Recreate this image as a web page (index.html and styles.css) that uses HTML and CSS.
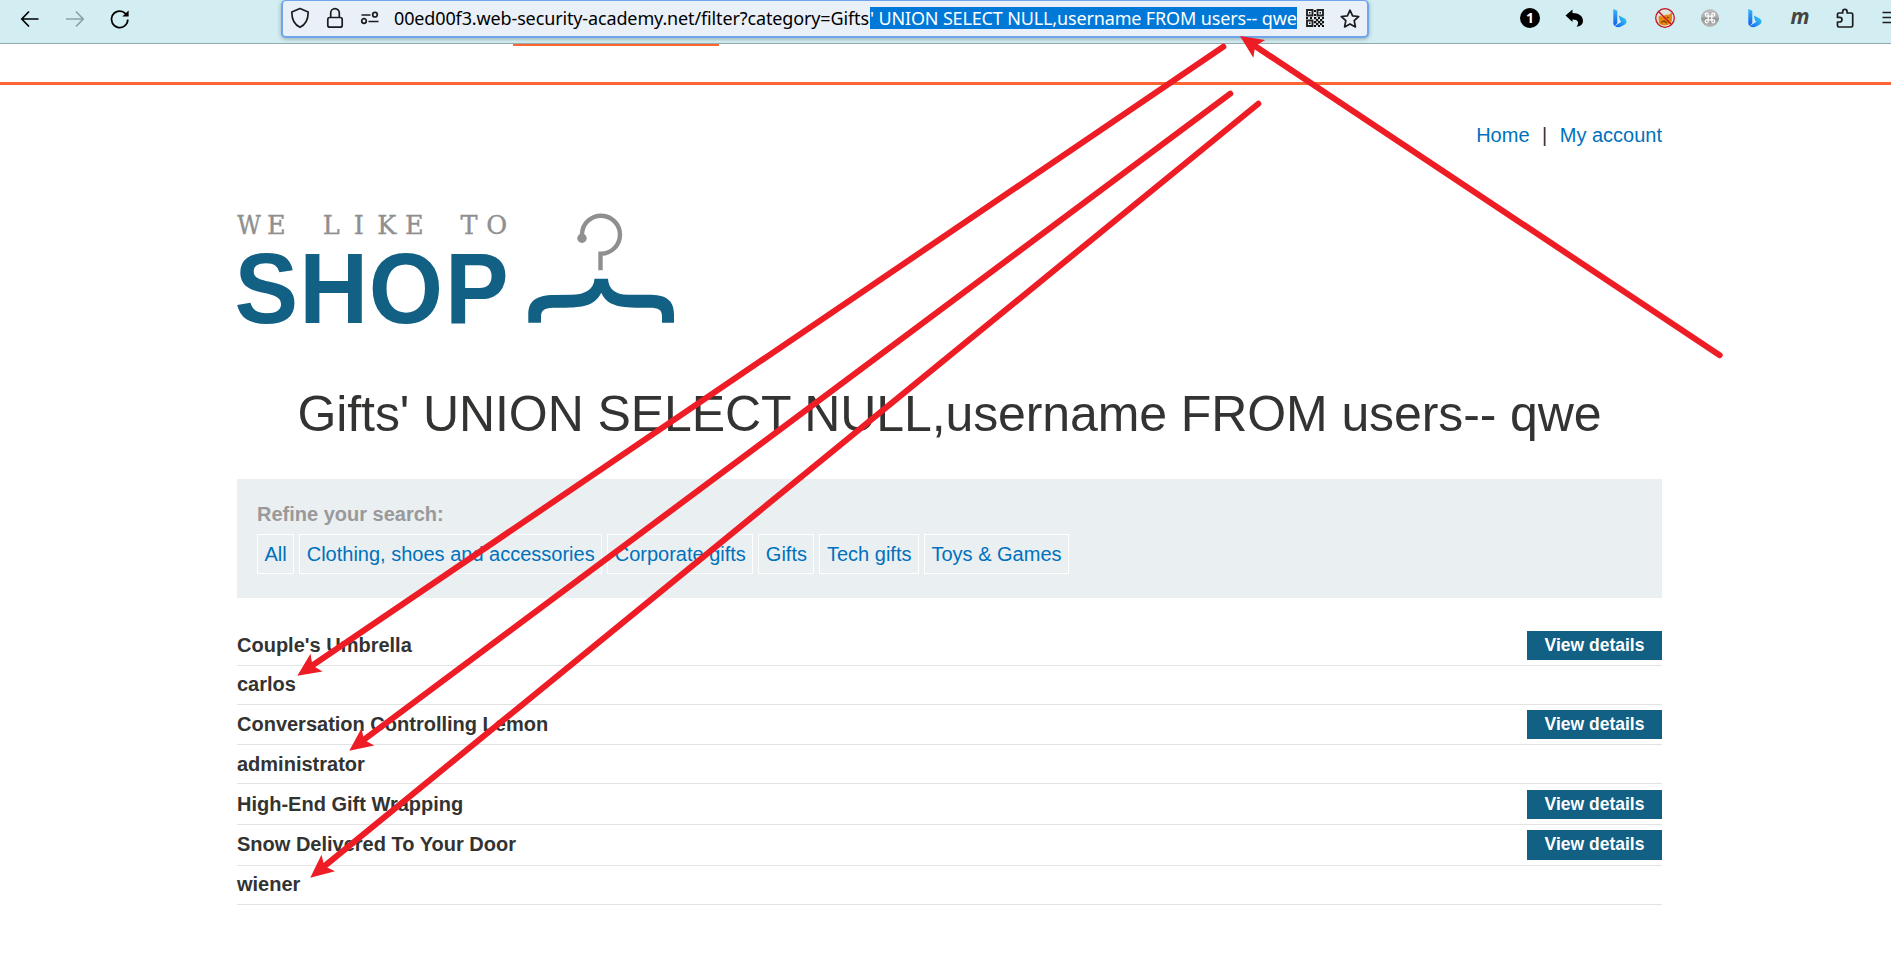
FILE: index.html
```html
<!DOCTYPE html>
<html lang="en">
<head>
<meta charset="utf-8">
<title>Shop</title>
<link rel="stylesheet" href="styles.css">
</head>
<body>
<div class="toolbar">
  <div class="nav">
    <svg class="ico" width="20" height="20" viewBox="0 0 20 20"><path d="M18.500 10H2M9 2.500L1.800 10L9 17.500"/></svg>
    <svg class="ico" width="20" height="20" viewBox="0 0 20 20"><path d="M1 10H18M11 2.500L18.200 10L11 17.500"/></svg>
    <svg class="ico" width="20" height="20" viewBox="0 0 20 20"><path d="M17.800 10.500A8.200 8.200 0 1 1 14.500 3.800L17 6"/><path d="M18.600 1.500V7.600H12.300Z"/></svg>
  </div>
  <div class="urlbar">
    <div class="site">
      <svg class="ico" width="20" height="22" viewBox="0 0 20 22"><path d="M10 1.500L18.200 5C18.200 12 16 17.500 10 20.300C4 17.500 1.800 12 1.800 5Z" stroke-linejoin="round"/></svg>
      <svg class="ico" width="18" height="22" viewBox="0 0 18 22"><rect x="1.800" y="10.500" width="14.400" height="9.700" rx="2"/><path d="M4.700 10.500V6A4.300 4.300 0 0 1 13.300 6V10.500"/></svg>
      <svg class="ico" width="20" height="16" viewBox="0 0 20 16"><path d="M1.500 5H10.500M8.500 11.500H18.500"/><circle cx="15" cy="4.700" r="2.300"/><circle cx="4" cy="11" r="2.300"/></svg>
    </div>
    <div class="url"><span class="url-a">00ed00f3.web-security-academy.net/filter?category=Gifts</span><span class="url-b">' UNION SELECT NULL,username FROM users-- qwe</span></div>
    <svg class="qr" width="18" height="18" viewBox="0 0 18 18"><path d="M1 1H6.500V6.500H1ZM11.500 1H17V6.500H11.500ZM1 11.500H6.500V17H1Z" fill="none" stroke="#222" stroke-width="1.900"/><path fill="#111" d="M3 3H4.500V4.500H3ZM13.500 3H15V4.500H13.500ZM3 13.500H4.500V15H3ZM8 1H10V3H8ZM8 5H10V7H8ZM0 8H2V10H0ZM4 8H6V10H4ZM8 8H10.300V10.300H8ZM12 8H14V10H12ZM16 8H18V10H16ZM10 10H12.300V12.300H10ZM14 10H16.300V12.300H14ZM8 12H10.300V14.300H8ZM12 12H14.300V14.300H12ZM16 12H18V14.300H16ZM10 14H12.300V16.300H10ZM14 14H16.300V16.300H14ZM8 16H10V18H8ZM12 16H14V18H12ZM16 16H18V18H16Z"/></svg>
    <svg class="ico star" width="20" height="20" viewBox="0 0 20 20"><path d="M10 1.200L12.600 6.800L18.700 7.500L14.200 11.600L15.400 17.900L10 14.900L4.600 17.900L5.800 11.600L1.300 7.500L7.400 6.800Z" stroke-linejoin="round"/></svg>
  </div>
  <div class="ext">
    <svg width="20" height="20" viewBox="0 0 20 20"><circle cx="10" cy="10" r="10"/><text class="one" x="10" y="15" text-anchor="middle">1</text></svg>
    <svg width="20" height="20" viewBox="0 0 20 20"><path d="M.5 7.500L7.500 1.500V5C14 5 18 8 18 13C18 16 16 18 11.500 18.800C14.500 15 13.500 11.500 7.500 11.500V14Z"/></svg>
    <svg width="20" height="20" viewBox="0 0 20 20"><use href="#bing"/></svg>
    <svg width="20" height="20" viewBox="0 0 20 20"><circle cx="10" cy="10" r="9" fill="#dce3e2"/><path d="M3.500 9L5 7.500L8 9C10 6 12 7 13 7L17 4.500L17 12C16 18 7 19 4 15Z" fill="#e8860c"/><path d="M6 14.500L9 13L12 15M12 9L14 10" fill="none" stroke="#6b4310" stroke-width="1.200"/><circle cx="10" cy="10" r="9.300" fill="none" stroke="#c8131e" stroke-width="1.300"/><path d="M3.500 3.500L16.500 16.500" stroke="#c8131e" stroke-width="1.400"/></svg>
    <svg width="20" height="20" viewBox="0 0 20 20"><defs><linearGradient id="gr" x2="0" y2="1"><stop offset="0" stop-color="#c0c0c0"/><stop offset=".49" stop-color="#aaa"/><stop offset=".5" stop-color="#909090"/><stop offset="1" stop-color="#bababa"/></linearGradient></defs><circle cx="10" cy="10" r="9" fill="url(#gr)"/><path d="M8.200 8.200H11.800V11.800H8.200ZM8.200 8.200H6.700A1.500 1.500 0 1 1 8.200 6.700ZM11.800 8.200V6.700A1.500 1.500 0 1 1 13.300 8.200ZM11.800 11.800H13.300A1.500 1.500 0 1 1 11.800 13.300ZM8.200 11.800V13.300A1.500 1.500 0 1 1 6.700 11.800Z" fill="none" stroke="#fff" stroke-width="1.200"/></svg>
    <svg width="20" height="20" viewBox="0 0 20 20"><defs><linearGradient id="b1" x2="0" y2="1"><stop offset="0" stop-color="#35b6f6"/><stop offset="1" stop-color="#1457ee"/></linearGradient><linearGradient id="b2" x1="1" x2="0" y2="1"><stop offset="0" stop-color="#3ad6ee"/><stop offset="1" stop-color="#1260f4"/></linearGradient><g id="bing"><path d="M3.300 1L7.300 2.800V15L4.800 18Q3.300 17 3.300 15Z" fill="url(#b1)"/><path d="M8.800 7.500L14 10Q16.800 11.500 16.500 14.500Q15.500 16.500 12 18Q8 20.500 4.800 18L11.500 13.800L10 12.200Z" fill="url(#b2)"/></g></defs><use href="#bing"/></svg>
    <svg width="20" height="20" viewBox="0 0 20 20"><text class="em" x="10" y="15.500" text-anchor="middle">m</text></svg>
    <svg class="ico" width="20" height="20" viewBox="0 0 20 20"><path transform="translate(.7 0)" d="M1.800 7V6Q1.800 5 3 5H7V3.500A2.200 2.200 0 0 1 11.400 3.500V5H15.500Q17 5 17 6.500V17.500Q17 19 15.500 19H3.300Q1.800 19 1.800 17.500V14H4A2.300 2.300 0 0 0 4 9.400H1.800Z" stroke-linejoin="round"/></svg>
    <svg class="ico" width="20" height="20" viewBox="0 0 20 20"><path d="M2.500 4.500H19M2.500 9.500H19M2.500 14.500H19"/></svg>
  </div>
</div>
<div class="lab"><div class="lab-mark"></div></div>
<main class="page">
  <nav class="top"><a>Home</a><span>|</span><a>My account</a></nav>
  <svg class="logo" width="450" height="130" viewBox="0 0 450 130">
    <text class="like" y="33.500" text-anchor="middle" x="12 39.200 66.700 94.200 121.700 149.700 177.200 204.500 232 259.700"><tspan class="cond">W</tspan>E LIKE TO</text>
    <g transform="scale(.955 1)"><text class="shop" y="122.700" x="-2.500 65.200 138 217.700">SHOP</text></g>
    <g transform="translate(0 .7)">
      <path d="M345 37V33A19 19 0 1 1 364 53H363.500V69.500" fill="none" stroke="#8f8f8f" stroke-width="4.400"/>
      <circle cx="345" cy="37.500" r="4.700" fill="#8f8f8f"/>
      <path d="M357.500 78H371C371.500 88 378 94 391 94H411C429 94 437 99 437 114V122H425V116C425 109 422 107 412 107C386 107 371 107 364.300 92C357 106 345 107 320 107C309 107 304 108 304 116V122H291.300V114C291.300 100 299 94.500 317 94.200L334 94C349 94 357 88 357.500 78Z" fill="#126084"/>
    </g>
  </svg>
  <h1>Gifts' UNION SELECT NULL,username FROM users-- qwe</h1>
  <section class="filter">
    <label>Refine your search:</label>
    <div class="chips"><a>All</a><a>Clothing, shoes and accessories</a><a>Corporate gifts</a><a>Gifts</a><a>Tech gifts</a><a>Toys &amp; Games</a></div>
  </section>
  <div class="list">
    <div class="row r1"><b>Couple's Umbrella</b><a>View details</a></div>
    <div class="row r2"><b>carlos</b></div>
    <div class="row r3"><b>Conversation Controlling Lemon</b><a>View details</a></div>
    <div class="row r5"><b>administrator</b></div>
    <div class="row r4"><b>High-End Gift Wrapping</b><a>View details</a></div>
    <div class="row r4 up"><b>Snow Delivered To Your Door</b><a>View details</a></div>
    <div class="row r2"><b>wiener</b></div>
  </div>
</main>
<svg class="arrows" width="1891" height="957" viewBox="0 0 1891 957">
  <defs><marker id="head" markerUnits="userSpaceOnUse" markerWidth="26" markerHeight="24" refX="13.500" refY="12" orient="auto"><path d="M23.500 12L.3 1.300L5.200 12L.3 22.700Z" fill="#ee1c25"/></marker></defs>
  <path d="M1223.300 46.700L305.600 670.100"/>
  <path d="M1230.300 93.700L357.300 744.700"/>
  <path d="M1258.300 103.700L318 871.400"/>
  <path d="M1719.700 355.200L1248.300 41.500"/>
</svg>
</body>
</html>
```
FILE: styles.css
```css
* { box-sizing: border-box; }
body {
  margin: 0;
  width: 1891px;
  height: 957px;
  overflow: hidden;
  position: relative;
  background: #fff;
  color: #333332;
  font: 20px "Liberation Sans", Arial, sans-serif;
}
svg { display: block; flex: none; overflow: visible; }
.toolbar {
  height: 44px;
  display: flex;
  align-items: flex-start;
  background: #d2eef2;
  border-bottom: 1px solid #93a9ac;
}
.ico path, .ico rect, .ico circle { fill: none; stroke: #1c1c1e; stroke-width: 1.7; }
.nav { display: flex; gap: 25px; padding: 9px 0 0 20px; width: 281px; flex: none; }
.nav .ico path { stroke: #000; }
.nav .ico:nth-child(2) path { stroke: #8ba2a5; }
.nav .ico:nth-child(3) path:last-child { fill: #000; stroke: none; }
.urlbar {
  width: 1088px;
  height: 38px;
  flex: none;
  display: flex;
  align-items: flex-start;
  background: #e9f0f7;
  border: 2px solid #6fa5ec;
  border-top-width: 1px;
  border-radius: 5px;
  box-shadow: 0 1px 4px rgba(0, 0, 0, .3);
}
.site { display: flex; flex: none; gap: 16px; padding: 6px 0 0 7px; width: 111px; align-items: center; }
.url {
  display: flex;
  flex: none;
  margin-top: 6px;
  width: 903px;
  height: 22px;
  font: 18px/22px "Noto Sans", sans-serif;
  color: #000;
  white-space: pre;
}
.url-a { width: 476px; letter-spacing: -.135px; }
.url-b { width: 427px; letter-spacing: -.15px; background: #0078d7; color: #fff; }
.qr { margin: 8px 0 0 9px; }
.star { margin: 8px 0 0 16px; }
.ext { display: flex; gap: 25px; padding: 8px 0 0; margin-left: 151px; flex: none; }
.one { font: bold 14px "Noto Sans", sans-serif; fill: #fff; }
.em { font: italic bold 21px "Open Sans", sans-serif; fill: #444; }
.lab { height: 41px; border-bottom: 3px solid #ff6633; }
.lab-mark { width: 206px; height: 2px; margin-left: 513px; background: #ff6633; }
.page { width: 1425px; margin-left: 237px; }
.top { display: flex; justify-content: flex-end; padding-top: 39px; height: 115px; line-height: 23px; }
.top span { margin: 0 12.5px; }
a { color: #0071bc; }
.logo { height: 130px; }
.like { font: 25.5px "DejaVu Serif", serif; fill: #8f8f8f; stroke: #8f8f8f; stroke-width: .4; }
.cond { font-family: "DejaVu Serif Condensed", "DejaVu Serif", serif; font-stretch: condensed; }
.shop { font: bold 100px "Liberation Sans", Arial, sans-serif; fill: #126084; }
h1 {
  margin: 54px 0 0;
  height: 95px;
  font-size: 50px;
  font-weight: 400;
  line-height: 60px;
  letter-spacing: -.1px;
  text-align: center;
  white-space: nowrap;
}
.filter { height: 119px; background: #eaeff2; padding: 23px 20px 0; }
.filter label { display: block; height: 32px; line-height: 24px; font-weight: bold; color: #999; }
.chips { display: flex; gap: 5px; }
.chips a { height: 40px; line-height: 38px; padding: 0 6.5px; border: 1px solid #fff; white-space: nowrap; }
.list { padding-top: 28px; }
.row { display: flex; justify-content: space-between; align-items: center; border-bottom: 1px solid #e3e3e3; }
.row b { line-height: 23px; }
.row a {
  width: 135px;
  height: 29px;
  background: #126084;
  color: #fff;
  font-size: 17.5px;
  font-weight: bold;
  line-height: 29px;
  text-align: center;
}
.r1 { height: 40px; }
.r2 { height: 39px; }
.r2 b, .up b { padding-bottom: 2px; }
.up a { height: 30px; }
.r3 { height: 40px; }
.r4 { height: 41px; }
.r5 { height: 39px; }
.arrows { position: absolute; left: 0; top: 0; }
.arrows > path { fill: none; stroke: #ee1c25; stroke-width: 6; stroke-linecap: round; marker-end: url(#head); }
```
